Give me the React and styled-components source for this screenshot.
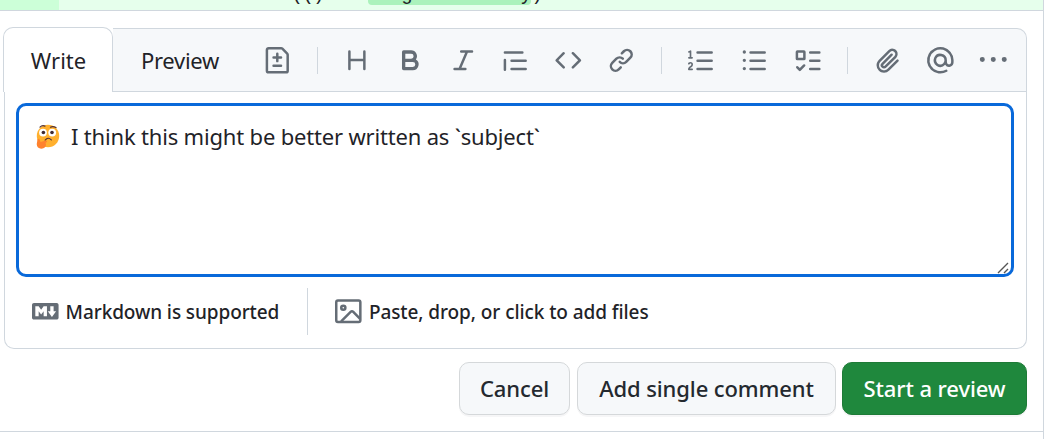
import React from "react";
import styled, { createGlobalStyle } from "styled-components";

const Global = createGlobalStyle`
  * { box-sizing: border-box; }
  body { margin: 0; background: #fff; color: #1f2328; overflow: hidden;
    font-family: "Noto Sans", "Open Sans", sans-serif; }
`;

const paths = {
  diff: "M1 1.75C1 .784 1.784 0 2.75 0h7.586c.464 0 .909.184 1.237.513l2.914 2.914c.329.328.513.773.513 1.237v9.586A1.75 1.75 0 0 1 13.25 16H2.75A1.75 1.75 0 0 1 1 14.25Zm1.75-.25a.25.25 0 0 0-.25.25v12.5c0 .138.112.25.25.25h10.5a.25.25 0 0 0 .25-.25V4.664a.25.25 0 0 0-.073-.177l-2.914-2.914a.25.25 0 0 0-.177-.073ZM8 3.25a.75.75 0 0 1 .75.75v1.5h1.5a.75.75 0 0 1 0 1.5h-1.5v1.5a.75.75 0 0 1-1.5 0V7h-1.5a.75.75 0 0 1 0-1.5h1.5V4A.75.75 0 0 1 8 3.25Zm-3 8a.75.75 0 0 1 .75-.75h4.5a.75.75 0 0 1 0 1.5h-4.5a.75.75 0 0 1-.75-.75Z",
  heading: "M3.25 2a.75.75 0 0 1 .75.75V7h7.5V2.75a.75.75 0 0 1 1.5 0v10.5a.75.75 0 0 1-1.5 0V8.5H4v4.75a.75.75 0 0 1-1.5 0V2.75A.75.75 0 0 1 3.25 2Z",
  bold: "M4 2h4.5a3.501 3.501 0 0 1 2.852 5.53A3.499 3.499 0 0 1 9.5 14H4a1 1 0 0 1-1-1V3a1 1 0 0 1 1-1Zm1 7v3h4.5a1.5 1.5 0 0 0 0-3Zm3.5-2a1.5 1.5 0 0 0 0-3H5v3Z",
  italic: "M6 2.75A.75.75 0 0 1 6.75 2h6.5a.75.75 0 0 1 0 1.5h-2.505l-3.858 9H9.25a.75.75 0 0 1 0 1.5h-6.5a.75.75 0 0 1 0-1.5h2.505l3.858-9H6.75A.75.75 0 0 1 6 2.75Z",
  quote: "M1.75 2.5h10.5a.75.75 0 0 1 0 1.5H1.75a.75.75 0 0 1 0-1.5Zm4 5h8.5a.75.75 0 0 1 0 1.5h-8.5a.75.75 0 0 1 0-1.5Zm0 5h8.5a.75.75 0 0 1 0 1.5h-8.5a.75.75 0 0 1 0-1.5ZM2.5 7.75v6a.75.75 0 0 1-1.5 0v-6a.75.75 0 0 1 1.5 0Z",
  code: "m11.28 3.22 4.25 4.25a.75.75 0 0 1 0 1.06l-4.25 4.25a.749.749 0 0 1-1.275-.326.749.749 0 0 1 .215-.734L13.94 8l-3.72-3.72a.749.749 0 0 1 .326-1.275.749.749 0 0 1 .734.215Zm-6.56 0a.751.751 0 0 1 1.042.018.751.751 0 0 1 .018 1.042L2.06 8l3.72 3.72a.749.749 0 0 1-.326 1.275.749.749 0 0 1-.734-.215L.47 8.53a.75.75 0 0 1 0-1.06Z",
  link: "m7.775 3.275 1.25-1.25a3.5 3.5 0 1 1 4.95 4.95l-2.5 2.5a3.5 3.5 0 0 1-4.95 0 .751.751 0 0 1 .018-1.042.751.751 0 0 1 1.042-.018 1.998 1.998 0 0 0 2.83 0l2.5-2.5a2.002 2.002 0 0 0-2.83-2.83l-1.25 1.25a.751.751 0 0 1-1.042-.018.751.751 0 0 1-.018-1.042Zm-4.69 9.64a1.998 1.998 0 0 0 2.83 0l1.25-1.25a.751.751 0 0 1 1.042.018.751.751 0 0 1 .018 1.042l-1.25 1.25a3.5 3.5 0 1 1-4.95-4.95l2.5-2.5a3.5 3.5 0 0 1 4.95 0 .751.751 0 0 1-.018 1.042.751.751 0 0 1-1.042.018 1.998 1.998 0 0 0-2.83 0l-2.5 2.5a1.998 1.998 0 0 0 0 2.83Z",
  ordered: "M5 3.25a.75.75 0 0 1 .75-.75h8.5a.75.75 0 0 1 0 1.5h-8.5A.75.75 0 0 1 5 3.25Zm0 5a.75.75 0 0 1 .75-.75h8.5a.75.75 0 0 1 0 1.5h-8.5A.75.75 0 0 1 5 8.25Zm0 5a.75.75 0 0 1 .75-.75h8.5a.75.75 0 0 1 0 1.5h-8.5a.75.75 0 0 1-.75-.75ZM.924 10.32a.5.5 0 0 1-.851-.525l.001-.001.001-.002.002-.004.007-.011c.097-.144.215-.273.348-.384.228-.19.588-.392 1.068-.392.468 0 .858.181 1.126.484.259.294.377.673.377 1.038 0 .987-.686 1.495-1.156 1.845l-.047.035c-.303.225-.522.4-.654.597h1.357a.5.5 0 0 1 0 1H.5a.5.5 0 0 1-.5-.5c0-1.005.692-1.52 1.167-1.875l.035-.025c.531-.396.8-.625.8-1.078a.57.57 0 0 0-.128-.376C1.806 10.068 1.695 10 1.5 10a.658.658 0 0 0-.429.163.835.835 0 0 0-.144.153ZM2.003 2.5V6h.503a.5.5 0 0 1 0 1H.5a.5.5 0 0 1 0-1h.503V3.308l-.28.14a.5.5 0 0 1-.446-.895l1.003-.5a.5.5 0 0 1 .723.447Z",
  unordered: "M5.75 2.5h8.5a.75.75 0 0 1 0 1.5h-8.5a.75.75 0 0 1 0-1.5Zm0 5h8.5a.75.75 0 0 1 0 1.5h-8.5a.75.75 0 0 1 0-1.5Zm0 5h8.5a.75.75 0 0 1 0 1.5h-8.5a.75.75 0 0 1 0-1.5ZM2 14a1 1 0 1 1 0-2 1 1 0 0 1 0 2Zm1-6a1 1 0 1 1-2 0 1 1 0 0 1 2 0ZM2 4a1 1 0 1 1 0-2 1 1 0 0 1 0 2Z",
  tasks: "M2 2h4a1 1 0 0 1 1 1v4a1 1 0 0 1-1 1H2a1 1 0 0 1-1-1V3a1 1 0 0 1 1-1Zm4.655 8.595a.75.75 0 0 1 0 1.06L4.03 14.28a.75.75 0 0 1-1.06 0l-1.5-1.5a.749.749 0 0 1 .326-1.275.749.749 0 0 1 .734.215l.97.97 2.095-2.095a.75.75 0 0 1 1.06 0ZM9.75 2.5h5.5a.75.75 0 0 1 0 1.5h-5.5a.75.75 0 0 1 0-1.5Zm0 5h5.5a.75.75 0 0 1 0 1.5h-5.5a.75.75 0 0 1 0-1.5Zm0 5h5.5a.75.75 0 0 1 0 1.5h-5.5a.75.75 0 0 1 0-1.5Zm-7.25-9v3h3v-3Z",
  clip: "M12.212 3.02a1.753 1.753 0 0 0-2.478.003l-5.83 5.83a3.007 3.007 0 0 0-.88 2.127c0 .795.315 1.551.88 2.116.567.567 1.333.89 2.126.89.79 0 1.548-.321 2.116-.89l5.48-5.48a.75.75 0 0 1 1.061 1.06l-5.48 5.48a4.492 4.492 0 0 1-3.177 1.33c-1.2 0-2.345-.487-3.187-1.33a4.483 4.483 0 0 1-1.32-3.177c0-1.195.475-2.341 1.32-3.186l5.83-5.83a3.25 3.25 0 0 1 5.553 2.297c0 .863-.343 1.691-.953 2.301L7.439 12.39c-.375.377-.884.59-1.416.593a1.998 1.998 0 0 1-1.412-.593 1.992 1.992 0 0 1 0-2.828l5.48-5.48a.751.751 0 0 1 1.042.018.751.751 0 0 1 .018 1.042l-5.48 5.48a.492.492 0 0 0 0 .707.499.499 0 0 0 .352.154.51.51 0 0 0 .356-.154l5.833-5.827a1.755 1.755 0 0 0 0-2.481Z",
  mention: "M4.75 2.37a6.501 6.501 0 0 0 6.5 11.26.75.75 0 0 1 .75 1.298A7.999 7.999 0 0 1 .989 4.148 8 8 0 0 1 16 7.75v1.5a2.75 2.75 0 0 1-5.072 1.475 3.999 3.999 0 0 1-6.65-4.19A4 4 0 0 1 12 8v1.25a1.25 1.25 0 0 0 2.5 0V7.867a6.5 6.5 0 0 0-9.75-5.496ZM10.5 8a2.5 2.5 0 1 0-5 0 2.5 2.5 0 0 0 5 0Z",
  more: "M1.4 9a1.5 1.5 0 1 0 0-3 1.5 1.5 0 0 0 0 3ZM8 9a1.5 1.5 0 1 0 0-3 1.5 1.5 0 0 0 0 3ZM14.6 9a1.5 1.5 0 1 0 0-3 1.5 1.5 0 0 0 0 3Z",
  markdown: "M14.85 3c.63 0 1.15.52 1.14 1.15v7.7c0 .63-.51 1.15-1.15 1.15H1.15C.52 13 0 12.48 0 11.84V4.15C0 3.52.52 3 1.15 3ZM9 11V5H7L5.5 7 4 5H2v6h2V8l1.5 1.92L7 8v3Zm2.99.5L14.5 8H13V5h-2v3H9.5Z",
};

const Svg = styled.svg`
  width: 26.6px; height: 26.6px; flex: none; display: block; overflow: visible;
  fill: #656d76;
`;
const Icon = ({ name }) => <Svg viewBox="0 0 16 16"><path d={paths[name]} fillRule="evenodd" /></Svg>;
const Outline = styled.g`fill: none; stroke: #656d76; stroke-width: 1.5; stroke-linejoin: round;`;
const ImageIcon = () => (
  <Svg viewBox="0 0 16 16">
    <Outline>
      <rect x=".75" y="1.5" width="14.5" height="12.9" rx="1" />
      <circle cx="5" cy="5.85" r="1.25" />
      <path d="M3.7 14 9.4 8.4q.8-.8 1.6 0l4.1 4.1" />
    </Outline>
  </Svg>
);

const Frame = styled.main`
  width: 1044px; height: 439px; border-right: 1px solid #d0d7de;
  display: flex; flex-direction: column;
`;
const CodeRow = styled.div`
  height: 11px; flex: none; display: flex; overflow: hidden; align-items: flex-end;
  background: #e6ffec; border-bottom: 1px solid #d0d7de;
`;
const LineNumber = styled.div`width: 59px; height: 10px; background: #ccffd8;`;
const Code = styled.pre`
  margin: 0 0 5px 12px; font: 20px/21px "Liberation Mono", monospace; letter-spacing: -1px;
  display: flex;
`;
const Mark = styled.span`background: #abf2bc; border-radius: 4px; letter-spacing: -1.13px;`;
const Comment = styled.section`
  height: 421px; padding: 16px 16px 0 3px; border-bottom: 1px solid #d0d7de;
  display: flex; flex-direction: column;
`;
const Editor = styled.div`
  height: 322px; flex: none; display: flex; flex-direction: column;
`;
const Header = styled.header`height: 65px; flex: none; display: flex; align-items: flex-end;`;
const WriteTab = styled.button`
  width: 110px; height: 65px; flex: none; padding: 0 0 0 1px; border: 1px solid #d0d7de; border-bottom: 0;
  border-radius: 10px 10px 0 0; background: #fff; color: #1f2328;
  font: 22px/30px "Noto Sans", sans-serif;
`;
const Toolbar = styled.div`
  flex: 1; height: 64px; display: flex; align-items: center;
  background: #f6f8fa; border: solid #d0d7de; border-width: 1px 1px 1px 0; border-radius: 0 10px 0 0;
`;
const PreviewTab = styled.span`
  width: 78px; margin: 0 0 0 28px; font-size: 22px; line-height: 30px; white-space: nowrap;
  letter-spacing: -0.3px;
`;
const Tool = styled.span`margin-left: ${(p) => p.$gap}px; width: 26.6px; flex: none;`;
const Rule = styled.i`
  width: 1px; height: ${(p) => p.$h}px; margin-left: ${(p) => p.$gap}px; background: #d0d7de; flex: none;
`;
const Body = styled.div`
  flex: 1; margin-left: 1px; padding: 11px 12px 0 11px; border: 1px solid #d0d7de; border-top: 0;
  border-radius: 0 0 10px 10px;
`;
const Field = styled.div`
  height: 174px; border: 3px solid #0969da; border-radius: 10px; padding: 15px 16px 0 16px;
  display: flex; align-items: flex-start; position: relative;
`;
const Emoji = styled.svg`width: 25px; height: 25px; margin: 3px 11px 0 0; flex: none;`;
const Text = styled.span`
  font-size: ${(p) => p.$size}px; font-weight: ${(p) => p.$weight || 400}; line-height: 30px;
  letter-spacing: ${(p) => p.$track || 0}px; white-space: nowrap;
`;
const Grip = styled.svg`position: absolute; right: 1px; bottom: 0; width: 13px; height: 13px;`;
const Footer = styled.footer`display: flex; align-items: center; height: 69px; padding-left: 16px;`;
const Hint = styled.div`display: flex; align-items: center; gap: 7px; margin-left: ${(p) => p.$gap || 0}px;`;
const Actions = styled.div`display: flex; justify-content: flex-end; margin-top: 13px;`;
const Button = styled.button`
  height: 53px; width: ${(p) => p.$w}px; margin-left: ${(p) => p.$gap}px; padding: 0 0 2px;
  border: 1px solid ${(p) => (p.$primary ? "#1e7b37" : "#d5d8da")}; border-radius: 10px;
  background: ${(p) => (p.$primary ? "#1f883d" : "#f6f8fa")}; color: ${(p) => (p.$primary ? "#fff" : "#24292f")};
  box-shadow: 0 2px 0 rgba(31, 35, 40, 0.04); font-family: "Noto Sans", sans-serif;
`;

export default function App() {
  return (
    <>
      <Global />
      <Frame>
        <CodeRow>
          <LineNumber />
          <Code>{".                   (()    "}<Mark>{"   g          y"}</Mark>)</Code>
        </CodeRow>
        <Comment>
          <Editor>
            <Header>
              <WriteTab>Write</WriteTab>
              <Toolbar>
                <PreviewTab>Preview</PreviewTab>
                <Tool $gap={45}><Icon name="diff" /></Tool>
                <Rule $h={27} $gap={26.4} />
                <Tool $gap={26}><Icon name="heading" /></Tool>
                <Tool $gap={26.4}><Icon name="bold" /></Tool>
                <Tool $gap={26.2}><Icon name="italic" /></Tool>
                <Tool $gap={25.8}><Icon name="quote" /></Tool>
                <Tool $gap={26.4}><Icon name="code" /></Tool>
                <Tool $gap={26.2}><Icon name="link" /></Tool>
                <Rule $h={27} $gap={26.6} />
                <Tool $gap={26.2}><Icon name="ordered" /></Tool>
                <Tool $gap={26.6}><Icon name="unordered" /></Tool>
                <Tool $gap={26}><Icon name="tasks" /></Tool>
                <Rule $h={27} $gap={26.6} />
                <Tool $gap={26}><Icon name="clip" /></Tool>
                <Tool $gap={26.4}><Icon name="mention" /></Tool>
                <Tool $gap={26.2}><Icon name="more" /></Tool>
              </Toolbar>
            </Header>
            <Body>
              <Field>
                <Emoji viewBox="0 0 25 25">
                  <circle cx="13" cy="12" r="11.2" fill="#ffb02e" />
                  <circle cx="8" cy="8.6" r="3.9" fill="#fff" />
                  <circle cx="17.2" cy="8.6" r="3.9" fill="#fff" />
                  <circle cx="8.4" cy="8.5" r="1.8" fill="#402a32" />
                  <circle cx="17" cy="8.5" r="1.8" fill="#402a32" />
                  <path d="M5 3.1Q7 1 10 2.1M15.5 3.2Q18 1.8 21 3.6M10.2 16.2Q13 12.5 16.3 15.8" fill="none" stroke="#503036" strokeWidth="1.2" strokeLinecap="round" />
                  <path d="M2.5 15.2Q4 14 4.8 16L5.5 18 10.8 16.4Q12.5 16.5 11.8 18L10.5 19Q12 22 9 24 5.5 25.5 3 23.5 1.2 21.5 2 18.5Z" fill="#ff822d" />
                </Emoji>
                <Text $size={22} $track={-0.18}>I think this might be better written as `subject`</Text>
                <Grip viewBox="0 0 13 13"><path d="M1 12 11 2M7 12l4-4" stroke="#555" strokeWidth="1.4" fill="none" /></Grip>
              </Field>
              <Footer>
                <Hint><Icon name="markdown" /><Text $size={19} $weight={500} $track={-0.1}>Markdown is supported</Text></Hint>
                <Rule $h={47} $gap={28} />
                <Hint $gap={27}><ImageIcon /><Text $size={19} $weight={500} $track={-0.08}>Paste, drop, or click to add files</Text></Hint>
              </Footer>
            </Body>
          </Editor>
          <Actions>
            <Button $w={111}><Text $size={22} $weight={550} $track={-0.1}>Cancel</Text></Button>
            <Button $w={259} $gap={7}><Text $size={22} $weight={550} $track={-0.1}>Add single comment</Text></Button>
            <Button $w={185} $gap={6} $primary><Text $size={22} $weight={550} $track={-0.1}>Start a review</Text></Button>
          </Actions>
        </Comment>
      </Frame>
    </>
  );
}
